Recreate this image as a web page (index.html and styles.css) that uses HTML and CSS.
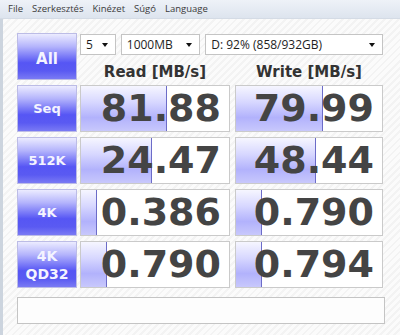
FILE: index.html
```html
<!DOCTYPE html>
<html>
<head>
	<title>CrystalDiskMark</title>
	<link rel="stylesheet" href="styles.css">
</head>
<body>
<div class="menubar">
	<span>File</span>
	<span>Szerkesztés</span>
	<span>Kinézet</span>
	<span>Súgó</span>
	<span>Language</span>
</div>

<div class="client">
	<div class="board">
		<div class="btn all">All</div>
		<div class="combos">
			<div class="combo c-count">5<i></i></div>
			<div class="combo c-size">1000MB<i></i></div>
			<div class="combo c-drive">D: 92% (858/932GB)<i></i></div>
		</div>
		<div class="head">Read [MB/s]</div>
		<div class="head">Write [MB/s]</div>

		<div class="btn">Seq</div>
		<div class="cell"><div class="bar" style="width:86px"></div><span>81.88</span></div>
		<div class="cell"><div class="bar" style="width:87px"></div><span>79.99</span></div>

		<div class="btn">512K</div>
		<div class="cell"><div class="bar" style="width:71px"></div><span>24.47</span></div>
		<div class="cell"><div class="bar" style="width:80px"></div><span>48.44</span></div>

		<div class="btn">4K</div>
		<div class="cell"><div class="bar" style="width:16px"></div><span>0.386</span></div>
		<div class="cell"><div class="bar" style="width:26px"></div><span>0.790</span></div>

		<div class="btn two">4K<br>QD32</div>
		<div class="cell"><div class="bar" style="width:26px"></div><span>0.790</span></div>
		<div class="cell"><div class="bar" style="width:26px"></div><span>0.794</span></div>
	</div>

	<div class="comment"></div>
</div>
</body>
</html>
```

FILE: styles.css
```css
html, body {
	margin: 0;
	height: 100%;
}

body {
	font-family: "Open Sans", "DejaVu Sans", sans-serif;
	background: #f6f6f6;
	overflow: hidden;
}

.menubar {
	height: 18px;
	background: linear-gradient(#eef2f8, #dde4ee);
	border-bottom: 1px solid #d4dbe5;
	font-size: 9.5px;
	line-height: 18px;
	color: #3a3a3a;
	padding-left: 8px;
	display: flex;
	gap: 9px;
}

.client {
	height: calc(100% - 19px);
	box-sizing: border-box;
	border-left: 3px solid #ccd4de;
	padding: 14px 0 0 14px;
	background: repeating-linear-gradient(-45deg, #fbfbfb 0 3px, #f3f3f3 3px 5px);
}

.board {
	display: grid;
	grid-template-columns: 60px 150px 150px;
	grid-template-rows: 22px 20px repeat(4, 47px);
	column-gap: 3px;
	row-gap: 5px;
}

.board > .cell:nth-child(3n+1) {
	margin-left: 2px;
}

.btn {
	box-sizing: border-box;
	border: 1px solid #bcbce6;
	background: linear-gradient(#ececff 0%, #b4b4fc 28%, #5656f4 64%, #5a5af2 82%, #7a7af4 100%);
	color: #f4f4ff;
	font-family: "DejaVu Sans", sans-serif;
	font-weight: bold;
	font-size: 13px;
	line-height: 16px;
	display: flex;
	align-items: center;
	justify-content: center;
	text-align: center;
}

.btn.all {
	grid-row: 1 / 3;
	font-size: 15px;
	padding-top: 4px;
}

.btn.two {
	line-height: 18px;
	font-size: 14px;
}

.combos {
	grid-column: 2 / 4;
	display: flex;
	gap: 5px;
	align-self: end;
}

.combo {
	position: relative;
	box-sizing: border-box;
	height: 21px;
	background: #fff;
	border: 1px solid #c4c4c4;
	font-size: 12px;
	line-height: 19px;
	color: #1e1e1e;
	padding-left: 5px;
}

.combo i {
	position: absolute;
	right: 7px;
	top: 8px;
	border-left: 3.5px solid transparent;
	border-right: 3.5px solid transparent;
	border-top: 4px solid #111;
}

.c-count { width: 36px; }
.c-size { width: 80px; }
.c-drive { width: 179px; }

.head {
	font-family: "DejaVu Sans", sans-serif;
	font-weight: bold;
	font-size: 15px;
	color: #333;
	text-align: center;
	line-height: 20px;
	padding-top: 2px;
}

.head + .head {
	margin-left: 2px;
}

.cell {
	position: relative;
	box-sizing: border-box;
	border: 1px solid #cacaca;
	background: #fff;
	overflow: hidden;
}

.bar {
	position: absolute;
	left: 0;
	top: 0;
	bottom: 0;
	box-sizing: border-box;
	border-right: 1px solid #6c6cc8;
	background: linear-gradient(#f6f6ff 0%, #d8d8ff 35%, #b2b2fc 70%, #c8c8fc 100%);
}

.cell span {
	position: relative;
	display: block;
	text-align: right;
	padding-right: 8px;
	font-family: "DejaVu Sans", sans-serif;
	font-weight: bold;
	font-size: 38px;
	line-height: 45px;
	color: #444;
}

.comment {
	box-sizing: border-box;
	width: 368px;
	height: 27px;
	margin-top: 9px;
	border: 1px solid #c4c4c4;
	background: #fdfdfd;
}
```
